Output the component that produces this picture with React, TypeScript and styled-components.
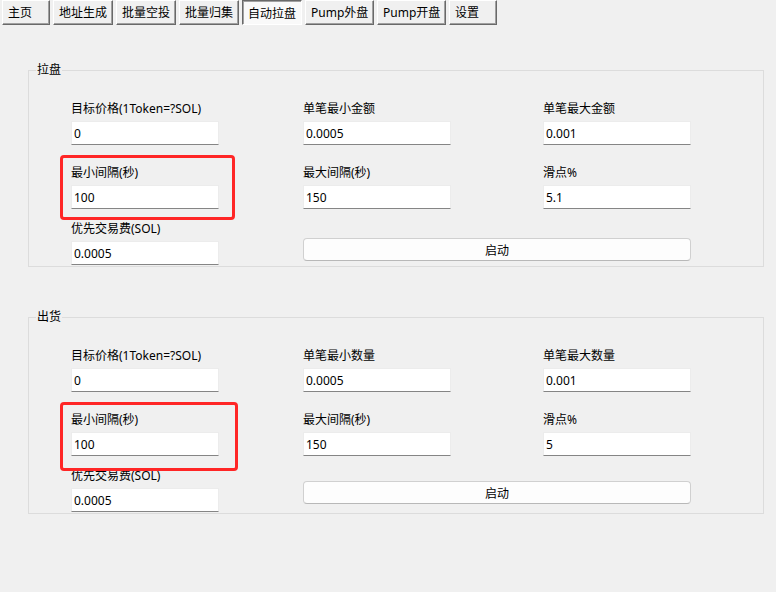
import React from "react";
import styled, { createGlobalStyle } from "styled-components";

const GlobalStyle = createGlobalStyle`
  html, body {
    margin: 0;
    padding: 0;
    background: #f0f0f0;
  }
  body {
    font-family: "Noto Sans", "Noto Sans CJK SC", sans-serif;
    font-size: 12px;
    color: #000;
  }
`;

type Field = { label: string; value: string };

type Section = {
  title: string;
  rows: [Field, Field, Field][];
  fee: Field;
  boxRight: number;
  boxBottom: number;
  buttonTop: number;
};

const sections: Section[] = [
  {
    title: "拉盘",
    rows: [
      [
        { label: "目标价格(1Token=?SOL)", value: "0" },
        { label: "单笔最小金额", value: "0.0005" },
        { label: "单笔最大金额", value: "0.001" },
      ],
      [
        { label: "最小间隔(秒)", value: "100" },
        { label: "最大间隔(秒)", value: "150" },
        { label: "滑点%", value: "5.1" },
      ],
    ],
    fee: { label: "优先交易费(SOL)", value: "0.0005" },
    boxRight: 16,
    boxBottom: 11,
    buttonTop: 17,
  },
  {
    title: "出货",
    rows: [
      [
        { label: "目标价格(1Token=?SOL)", value: "0" },
        { label: "单笔最小数量", value: "0.0005" },
        { label: "单笔最大数量", value: "0.001" },
      ],
      [
        { label: "最小间隔(秒)", value: "100" },
        { label: "最大间隔(秒)", value: "150" },
        { label: "滑点%", value: "5" },
      ],
    ],
    fee: { label: "优先交易费(SOL)", value: "0.0005" },
    boxRight: 19,
    boxBottom: 15,
    buttonTop: 13,
  },
];

const tabs = [
  { name: "主页", width: 48 },
  { name: "地址生成", width: 60 },
  { name: "批量空投", width: 60 },
  { name: "批量归集", width: 60 },
  { name: "自动拉盘", width: 60 },
  { name: "Pump外盘", width: 69 },
  { name: "Pump开盘", width: 69 },
  { name: "设置", width: 48 },
];

const App: React.FC = () => {
  return (
    <>
      <GlobalStyle />
      <Page>
        <TabBar>
          {tabs.map((t) => (
            <Tab key={t.name} $w={t.width} $active={t.name === "自动拉盘"}>
              {t.name}
            </Tab>
          ))}
        </TabBar>
        <Groups>
          {sections.map((s) => (
            <Group key={s.title}>
              <Legend>{s.title}</Legend>
              {s.rows.map((row, i) => (
                <Row key={i} $mt={i === 0 ? 23 : 20}>
                  {row.map((f, j) => (
                    <Cell key={f.label}>
                      {i === 1 && j === 0 ? (
                        <Marked $r={s.boxRight} $b={s.boxBottom}>
                          <Label>{f.label}</Label>
                          <Input defaultValue={f.value} />
                        </Marked>
                      ) : (
                        <>
                          <Label>{f.label}</Label>
                          <Input defaultValue={f.value} />
                        </>
                      )}
                    </Cell>
                  ))}
                </Row>
              ))}
              <Row $mt={12}>
                <Cell>
                  <Label>{s.fee.label}</Label>
                  <Input defaultValue={s.fee.value} />
                </Cell>
                <ButtonCell>
                  <StartButton $mt={s.buttonTop}>启动</StartButton>
                </ButtonCell>
              </Row>
            </Group>
          ))}
        </Groups>
      </Page>
    </>
  );
};

export default App;

const Page = styled.div`
  width: 776px;
  height: 592px;
  overflow: hidden;
`;

const TabBar = styled.div`
  display: flex;
  gap: 3px;
  padding-left: 2px;
  height: 25px;
`;

const Tab = styled.div<{ $active?: boolean; $w: number }>`
  box-sizing: border-box;
  height: 25px;
  width: ${(p) => p.$w}px;
  padding: 0 0 0 5px;
  display: flex;
  align-items: center;
  line-height: 16px;
  white-space: nowrap;
  overflow: hidden;
  background: ${(p) => (p.$active ? "#f9f9f9" : "#f0f0f0")};
  border: 1px solid;
  border-color: ${(p) =>
    p.$active ? "#696969 #ffffff #ffffff #696969" : "#ffffff #696969 #696969 #ffffff"};
  box-shadow: ${(p) =>
    p.$active ? "inset 1px 1px #a0a0a0" : "inset -1px -1px #a0a0a0"};
  padding-top: ${(p) => (p.$active ? "3px" : "0")};
`;

const Groups = styled.div`
  display: flex;
  flex-direction: column;
  gap: 42px;
  padding: 37px 0 0 28px;
  width: 736px;
`;

const Group = styled.fieldset`
  margin: 0;
  padding: 0 0 1px 0;
  border: 1px solid #dcdcdc;
  min-inline-size: 0;
`;

const Legend = styled.legend`
  padding: 0 1px;
  margin-left: 7px;
  line-height: 16px;
  font-size: 12px;
`;

const Row = styled.div<{ $mt: number }>`
  display: grid;
  grid-template-columns: 232px 240px 148px;
  padding-left: 42px;
  margin-top: ${(p) => p.$mt}px;
`;

const Cell = styled.div`
  display: flex;
  flex-direction: column;
  width: 148px;
`;

const ButtonCell = styled.div`
  grid-column: 2 / span 2;
  display: flex;
  flex-direction: column;
`;

const Marked = styled.div<{ $r: number; $b: number }>`
  position: relative;
  display: flex;
  flex-direction: column;

  &::after {
    content: "";
    position: absolute;
    left: -11px;
    top: -10px;
    right: -${(p) => p.$r}px;
    bottom: -${(p) => p.$b}px;
    border: 3px solid #ff2626;
    border-radius: 4px;
    pointer-events: none;
  }
`;

const Label = styled.div`
  height: 16px;
  line-height: 16px;
  margin-bottom: 4px;
  white-space: nowrap;
`;

const Input = styled.input`
  box-sizing: border-box;
  width: 148px;
  height: 24px;
  margin: 0;
  padding: 0 2px;
  border: 1px solid #ececec;
  border-bottom-color: #858585;
  background: #fff;
  font-family: "Noto Sans", "Noto Sans CJK SC", sans-serif;
  font-size: 12px;
  color: #000;
  outline: none;
`;

const StartButton = styled.button<{ $mt: number }>`
  box-sizing: border-box;
  width: 388px;
  height: 23px;
  margin-top: ${(p) => p.$mt}px;
  padding: 0;
  background: #fdfdfd;
  border: 1px solid #d0d0d0;
  border-bottom-color: #b8b8b8;
  border-radius: 4px;
  font-family: "Noto Sans", "Noto Sans CJK SC", sans-serif;
  font-size: 12px;
  color: #000;
`;
